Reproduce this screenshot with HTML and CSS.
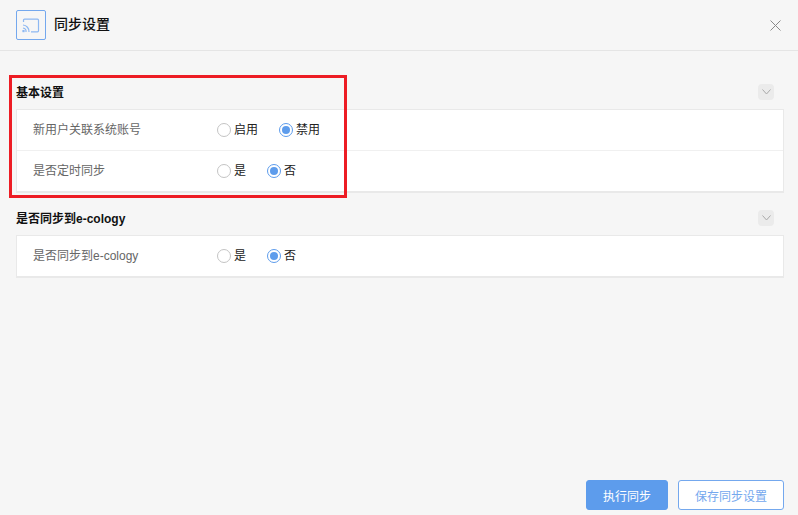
FILE: index.html
```html
<!DOCTYPE html>
<html lang="zh">
<head>
<meta charset="utf-8">
<title>同步设置</title>
<link rel="stylesheet" href="styles.css">
</head>
<body>
<div class="dialog">
  <header class="header">
    <div class="title-group">
      <span class="logo">
        <svg width="18" height="15" viewBox="0 0 18 15" fill="none" stroke="#8db8f2" stroke-width="1.2">
          <path d="M1.5 4V2.2a1 1 0 0 1 1-1h13a1 1 0 0 1 1 1v10.6a1 1 0 0 1-1 1H9"/>
          <path d="M1 7a6.5 6.5 0 0 1 6 7M1 10a3.6 3.6 0 0 1 3 4"/>
          <path d="M1 12.6h1v1H1z" fill="#8db8f2"/>
        </svg>
      </span>
      <h1 class="title">同步设置</h1>
    </div>
    <button class="close" aria-label="关闭">
      <svg width="11" height="11" viewBox="0 0 11 11" stroke="#8a8a8a" stroke-width="1"><path d="M.5.5l10 10M10.5.5l-10 10"/></svg>
    </button>
  </header>

  <main class="content">
    <section class="section">
      <div class="section-head">
        <h2 class="section-title">基本设置</h2>
        <span class="toggle"><svg width="9" height="6" viewBox="0 0 9 6" fill="none" stroke="#a9a9a9"><path d="M.5.5L4.5 5 8.5.5"/></svg></span>
      </div>
      <div class="panel">
        <div class="row">
          <span class="label">新用户关联系统账号</span>
          <div class="radios">
            <label class="radio"><span class="dot"></span><span class="radio-text">启用</span></label>
            <label class="radio"><span class="dot on"></span><span class="radio-text">禁用</span></label>
          </div>
        </div>
        <div class="row">
          <span class="label">是否定时同步</span>
          <div class="radios">
            <label class="radio"><span class="dot"></span><span class="radio-text">是</span></label>
            <label class="radio"><span class="dot on"></span><span class="radio-text">否</span></label>
          </div>
        </div>
      </div>
    </section>

    <section class="section">
      <div class="section-head">
        <h2 class="section-title">是否同步到e-cology</h2>
        <span class="toggle"><svg width="9" height="6" viewBox="0 0 9 6" fill="none" stroke="#a9a9a9"><path d="M.5.5L4.5 5 8.5.5"/></svg></span>
      </div>
      <div class="panel">
        <div class="row">
          <span class="label">是否同步到e-cology</span>
          <div class="radios">
            <label class="radio"><span class="dot"></span><span class="radio-text">是</span></label>
            <label class="radio"><span class="dot on"></span><span class="radio-text">否</span></label>
          </div>
        </div>
      </div>
    </section>
  </main>

  <footer class="footer">
    <button class="btn primary">执行同步</button>
    <button class="btn ghost">保存同步设置</button>
  </footer>

  <div class="annotation"></div>
</div>
</body>
</html>
```

FILE: styles.css
```css
* { box-sizing: border-box; }
html, body { margin: 0; height: 100%; }
body {
  background: #f6f6f6;
  font-family: "Liberation Sans", "Noto Sans CJK SC", sans-serif;
  font-size: 12px;
  color: #111;
  overflow: hidden;
}
.dialog {
  position: relative;
  width: 798px;
  height: 515px;
  display: flex;
  flex-direction: column;
}
.header {
  height: 51px;
  flex: none;
  display: flex;
  align-items: center;
  justify-content: space-between;
  padding: 0 17px 0 16px;
  border-bottom: 1px solid #e5e5e5;
}
.title-group { display: flex; align-items: center; gap: 8px; }
.logo {
  width: 30px;
  height: 30px;
  border: 1px solid #74a8ee;
  border-radius: 2px;
  display: flex;
  align-items: center;
  justify-content: center;
}
.title { margin: 0 0 4px; font-size: 14px; font-weight: 500; color: #111; }
.close {
  width: 11px;
  height: 11px;
  padding: 0;
  border: 0;
  background: none;
  display: flex;
}
.content {
  flex: 1;
  padding: 33px 14px 0 16px;
  display: flex;
  flex-direction: column;
  gap: 17px;
}
.section-head {
  height: 25px;
  display: flex;
  align-items: flex-start;
  justify-content: space-between;
  padding-right: 10px;
}
.section-title {
  margin: 0;
  padding-top: 1px;
  font-size: 12px;
  line-height: 17px;
  font-weight: 700;
  color: #111;
}
.toggle {
  width: 16px;
  height: 16px;
  border-radius: 4px;
  background: #ebebeb;
  display: flex;
  align-items: center;
  justify-content: center;
}
.panel {
  background: #fff;
  border: 1px solid #e9e9e9;
  border-bottom-width: 2px;
}
.row {
  height: 40px;
  display: flex;
  align-items: center;
  padding-left: 16px;
}
.row + .row { height: 41px; border-top: 1px solid #f0f0f0; }
.label { width: 184px; color: #666; line-height: 16px; margin-bottom: 1px; }
.radios { display: flex; gap: 21px; }
.radio { display: flex; align-items: center; gap: 3px; color: #222; }
.radio-text { margin-bottom: 3px; }
.dot {
  width: 14px;
  height: 14px;
  border: 1px solid #c4c4c4;
  border-radius: 50%;
  background: #fff;
  display: flex;
  align-items: center;
  justify-content: center;
}
.dot.on { border-color: #5d9cec; }
.dot.on::after {
  content: "";
  width: 8px;
  height: 8px;
  border-radius: 50%;
  background: #5d9cec;
}
.footer {
  flex: none;
  display: flex;
  justify-content: flex-end;
  gap: 10px;
  padding: 0 14px 5px 0;
}
.btn {
  height: 30px;
  border-radius: 3px;
  font: inherit;
  padding: 0;
}
.primary {
  width: 82px;
  background: #5d9cec;
  border: 1px solid #5d9cec;
  color: #fff;
}
.ghost {
  width: 106px;
  background: #fff;
  border: 1px solid #74a8ee;
  color: #74a8ee;
}
.annotation {
  position: absolute;
  left: 9px;
  top: 75px;
  width: 338px;
  height: 123px;
  border: 3px solid #ed1c24;
  pointer-events: none;
}
```
